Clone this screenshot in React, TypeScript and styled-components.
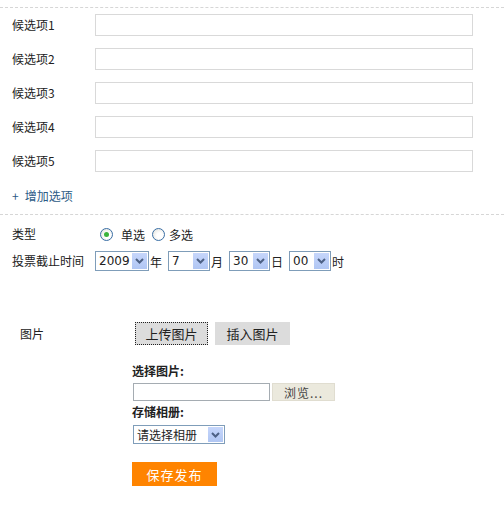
import { FC } from "react";
import styled, { createGlobalStyle } from "styled-components";

const GlobalStyle = createGlobalStyle`
  body {
    margin: 0;
    background: #fff;
    font-family: "Noto Sans CJK SC", "DejaVu Sans", sans-serif;
    font-size: 12px;
    color: #222;
  }
`;

const Page = styled.div`
  width: 504px;
  padding-top: 7px;
`;

const Dashed = styled.div`
  border-top: 1px dashed #d6d6d6;
`;

const OptionList = styled.div`
  display: flex;
  flex-direction: column;
  gap: 12px;
  padding-top: 6px;
`;

const Row = styled.div<{ $h?: number }>`
  display: flex;
  align-items: center;
  height: ${(p) => p.$h ?? 22}px;
`;

const Label = styled.div<{ $indent?: number }>`
  width: ${(p) => 95 - (p.$indent ?? 12)}px;
  padding-left: ${(p) => p.$indent ?? 12}px;
  flex: none;
  line-height: 16px;
`;

const TextInput = styled.div`
  width: 376px;
  height: 20px;
  border: 1px solid #d9d9d9;
  background: #fff;
`;

const AddLink = styled.div`
  color: #2c5b86;
  padding: 16px 0 0 12px;
  height: 16px;
  line-height: 16px;
  margin-bottom: 10px;

  span {
    margin-right: 6px;
  }
`;

const TypeBlock = styled.div`
  display: flex;
  flex-direction: column;
  gap: 8px;
  padding-top: 10px;
`;

const Radio = styled.span<{ $on?: boolean }>`
  position: relative;
  width: 11px;
  height: 11px;
  border-radius: 50%;
  border: 1px solid #3a6ea5;
  background: radial-gradient(circle at 60% 60%, #fff 30%, #dcdcd4 100%);
  margin: 0 8px 0 5px;
  flex: none;

  &::after {
    content: "";
    display: ${(p) => (p.$on ? "block" : "none")};
    position: absolute;
    left: 3px;
    top: 3px;
    width: 5px;
    height: 5px;
    border-radius: 50%;
    background: #3bb33b;
  }
`;

const RadioText = styled.span<{ $tight?: boolean }>`
  margin-left: ${(p) => (p.$tight ? -4 : 0)}px;
  margin-right: 2px;
`;

const SelectBox = styled.div<{ $w: number; $h?: number }>`
  width: ${(p) => p.$w - 2}px;
  height: ${(p) => (p.$h ?? 20) - 2}px;
  border: 1px solid #7f9db9;
  background: #fff;
  display: flex;
  align-items: center;
  overflow: hidden;
  flex: none;
`;

const SelectValue = styled.span`
  flex: 1;
  padding-left: 3px;
  white-space: nowrap;
  font-family: "DejaVu Sans", "Noto Sans CJK SC", sans-serif;
  font-size: 12px;
`;

const SelectValueCjk = styled(SelectValue)`
  font-family: "Noto Sans CJK SC", sans-serif;
`;

const ArrowBtn = styled.span`
  width: 15px;
  height: calc(100% - 2px);
  margin: 1px;
  background: linear-gradient(#c6d6fb, #b0c6f3);
  display: flex;
  align-items: center;
  justify-content: center;
  flex: none;
`;

const Unit = styled.span<{ $gap?: number }>`
  margin: 0 ${(p) => p.$gap ?? 6}px 0 1px;
`;

const ImageBlock = styled.div`
  margin-top: 51px;
`;

const Btn = styled.div<{ $focus?: boolean; $w?: number }>`
  width: ${(p) => p.$w ?? 73}px;
  height: 23px;
  background: #dcdcdc;
  display: flex;
  align-items: center;
  justify-content: center;
  box-sizing: border-box;
  border: 1px ${(p) => (p.$focus ? "dotted #222" : "solid #dcdcdc")};
  font-size: 13px;
  margin-right: 7px;
`;

const Upload = styled.div`
  padding-left: 132px;
  margin-top: 18px;
  display: flex;
  flex-direction: column;
  align-items: flex-start;
`;

const Heading = styled.div`
  font-weight: bold;
  line-height: 16px;
  height: 16px;
`;

const FileRow = styled.div`
  display: flex;
  margin: 4px 0 3px 1px;
`;

const FileField = styled.div`
  width: 135px;
  height: 16px;
  border: 1px solid #a5acb2;
  background: #fff;
`;

const BrowseBtn = styled.div`
  width: 61px;
  height: 16px;
  margin-left: 2px;
  border: 1px solid #e0ddd0;
  background: #ebe9dd;
  color: #444;
  display: flex;
  align-items: center;
  justify-content: center;
  font-size: 12px;
  letter-spacing: 1px;
`;

const AlbumWrap = styled.div`
  margin: 5px 0 0 1px;
`;

const SaveBtn = styled.div`
  margin-top: 18px;
  width: 85px;
  height: 24px;
  background: #ff8400;
  color: #fff;
  font-size: 13px;
  display: flex;
  align-items: center;
  justify-content: center;
  letter-spacing: 1px;
`;

const Chevron: FC = () => (
  <svg width="9" height="6" viewBox="0 0 9 6">
    <path d="M1 1 L4.5 4.5 L8 1" fill="none" stroke="#4d6185" strokeWidth="2" />
  </svg>
);

const Select: FC<{ w: number; value: string; cjk?: boolean; h?: number }> = ({ w, value, cjk, h }) => (
  <SelectBox $w={w} $h={h}>
    {cjk ? <SelectValueCjk>{value}</SelectValueCjk> : <SelectValue>{value}</SelectValue>}
    <ArrowBtn>
      <Chevron />
    </ArrowBtn>
  </SelectBox>
);

const options = ["候选项1", "候选项2", "候选项3", "候选项4", "候选项5"];

export default function App() {
  return (
    <Page>
      <GlobalStyle />
      <Dashed />
      <OptionList>
        {options.map((o) => (
          <Row key={o}>
            <Label>{o}</Label>
            <TextInput />
          </Row>
        ))}
      </OptionList>
      <AddLink>
        <span>+</span>增加选项
      </AddLink>
      <Dashed />
      <TypeBlock>
        <Row $h={18}>
          <Label>类型</Label>
          <Radio $on />
          <RadioText>单选</RadioText>
          <Radio />
          <RadioText $tight>多选</RadioText>
        </Row>
        <Row $h={20}>
          <Label>投票截止时间</Label>
          <Select w={54} value="2009" />
          <Unit>年</Unit>
          <Select w={42} value="7" />
          <Unit>月</Unit>
          <Select w={41} value="30" />
          <Unit>日</Unit>
          <Select w={42} value="00" />
          <Unit $gap={0}>时</Unit>
        </Row>
      </TypeBlock>
      <ImageBlock>
        <Row $h={23}>
          <Label $indent={20}>图片</Label>
          <Btn $focus style={{ marginLeft: 40 }}>上传图片</Btn>
          <Btn $w={75}>插入图片</Btn>
        </Row>
      </ImageBlock>
      <Upload>
        <Heading>选择图片:</Heading>
        <FileRow>
          <FileField />
          <BrowseBtn>浏览...</BrowseBtn>
        </FileRow>
        <Heading>存储相册:</Heading>
        <AlbumWrap>
          <Select w={92} h={19} value="请选择相册" cjk />
        </AlbumWrap>
        <SaveBtn>保存发布</SaveBtn>
      </Upload>
    </Page>
  );
}
